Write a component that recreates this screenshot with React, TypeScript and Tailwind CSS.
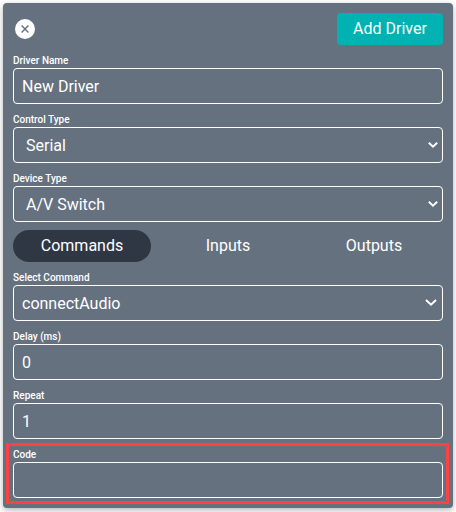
import type { ReactNode } from "react";

function Chevron({ className }: { className: string }) {
  return (
    <svg className={className} viewBox="0 0 12 8" fill="none" stroke="white" strokeWidth="1.9">
      <path d="M1.8 1.8 6 5.8l4.2-4" />
    </svg>
  );
}

function Field({ label, children }: { label: string; children?: ReactNode }) {
  return (
    <div>
      <div className="h-[15px] text-[10px] leading-[15px] font-medium">{label}</div>
      <div className="flex h-9 items-center justify-between rounded-[4px] border border-white pl-2 leading-[26px]">
        {children}
      </div>
    </div>
  );
}

export default function App() {
  return (
    <div className="h-[512px] w-[456px] bg-white p-[3px] font-['Roboto',sans-serif] text-base text-white">
      <div className="flex h-[505px] w-[450px] flex-col gap-2 rounded-[4px] bg-[#66717f] p-2.5 shadow-[0_2px_6px_rgba(0,0,0,0.3)]">
        <div className="flex h-8 items-center justify-between">
          <button className="ml-0.5 flex size-5 items-center justify-center rounded-full bg-white">
            <svg className="size-2" viewBox="0 0 8 8" stroke="#66717f" strokeWidth="1.4">
              <path d="M.6.6 7.4 7.4M7.4.6.6 7.4" />
            </svg>
          </button>
          <button className="h-8 w-[106px] rounded-[4px] bg-[#00b2b2]">Add Driver</button>
        </div>
        <Field label="Driver Name">
          <span className="pt-0.5">New Driver</span>
        </Field>
        <Field label="Control Type">
          <span className="pt-0.5 pl-1">Serial</span>
          <Chevron className="mr-[3px] h-2 w-3" />
        </Field>
        <Field label="Device Type">
          <span className="pt-0.5 pl-1">A/V Switch</span>
          <Chevron className="mr-[3px] h-2 w-3" />
        </Field>
        <div className="flex h-8 justify-between">
          <button className="w-[138px] rounded-full bg-[#303744]">Commands</button>
          <button className="w-[138px]">Inputs</button>
          <button className="w-[138px]">Outputs</button>
        </div>
        <Field label="Select Command">
          <span className="pt-0.5">connectAudio</span>
          <svg
            className="mr-1 mb-0.5 h-[9px] w-[14px]"
            viewBox="0 0 14 9"
            fill="none"
            stroke="white"
            strokeWidth="1.9"
          >
            <path d="M2 2l5 4.8L12 2" />
          </svg>
        </Field>
        <Field label="Delay (ms)">
          <span className="pt-0.5">0</span>
        </Field>
        <Field label="Repeat">
          <span className="pt-0.5">1</span>
        </Field>
        <div className="relative">
          <Field label="Code" />
          <div className="absolute -top-1 -right-1.5 -bottom-1.5 -left-[7px] border-3 border-[#ff4141]" />
        </div>
      </div>
    </div>
  );
}
